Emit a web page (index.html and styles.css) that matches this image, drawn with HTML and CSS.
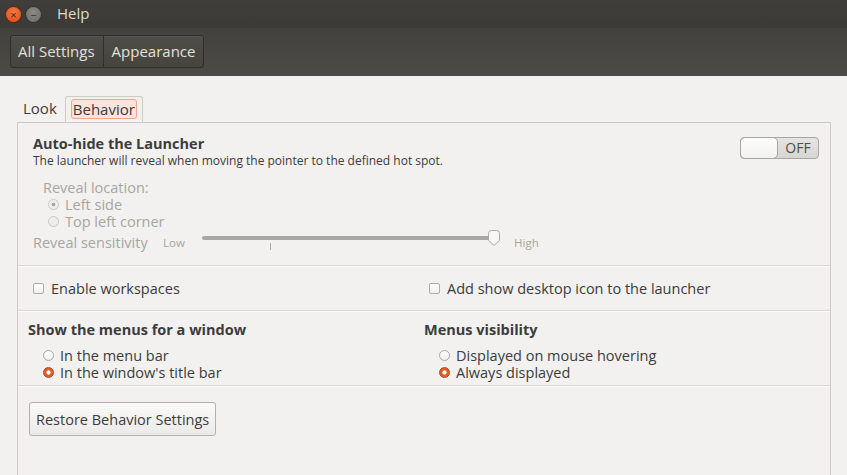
FILE: index.html
```html
<!DOCTYPE html>
<html lang="en">
<head>
    <meta charset="UTF-8">
    <title>Help</title>
    <link rel="stylesheet" href="styles.css">
</head>
<body>
    <div class="titlebar">
        <span class="wbtn close">&times;</span>
        <span class="wbtn minimize">&minus;</span>
        <span class="title">Help</span>
    </div>
    <div class="toolbar">
        <div class="crumbs">
            <button class="crumb">All Settings</button>
            <button class="crumb">Appearance</button>
        </div>
    </div>
    <div class="content">
        <div class="tabs">
            <div class="tab">Look</div>
            <div class="tab active"><span class="focus">Behavior</span></div>
        </div>
        <div class="panel">
            <section class="launcher">
                <div class="launcher-head">
                    <div>
                        <div class="heading">Auto-hide the Launcher</div>
                        <div class="desc">The launcher will reveal when moving the pointer to the defined hot spot.</div>
                    </div>
                    <div class="switch"><span class="knob"></span><span class="switch-label">OFF</span></div>
                </div>
                <div class="reveal disabled">
                    <div class="reveal-title">Reveal location:</div>
                    <label class="option"><span class="radio checked-dim"></span>Left side</label>
                    <label class="option"><span class="radio"></span>Top left corner</label>
                </div>
                <div class="sensitivity disabled">
                    <span class="sens-label">Reveal sensitivity</span>
                    <span class="small low">Low</span>
                    <div class="slider">
                        <div class="trough"></div>
                        <div class="tick"></div>
                        <svg class="thumb" width="14" height="16" viewBox="0 0 14 16">
                            <path d="M1.5 3.5 Q1.5 0.5 4.5 0.5 L9.5 0.5 Q12.5 0.5 12.5 3.5 L12.5 10.5 L7 15.3 L1.5 10.5 Z" fill="#f7f6f5" stroke="#aaa8a4"/>
                        </svg>
                    </div>
                    <span class="small">High</span>
                </div>
            </section>
            <section class="two-col checks">
                <label class="check-item"><span class="checkbox"></span>Enable workspaces</label>
                <label class="check-item"><span class="checkbox"></span>Add show desktop icon to the launcher</label>
            </section>
            <section class="two-col menus">
                <div class="group">
                    <div class="heading">Show the menus for a window</div>
                    <label class="option"><span class="radio"></span>In the menu bar</label>
                    <label class="option"><span class="radio on"></span>In the window's title bar</label>
                </div>
                <div class="group">
                    <div class="heading">Menus visibility</div>
                    <label class="option"><span class="radio"></span>Displayed on mouse hovering</label>
                    <label class="option"><span class="radio on"></span>Always displayed</label>
                </div>
            </section>
            <section class="restore">
                <button class="btn">Restore Behavior Settings</button>
            </section>
        </div>
    </div>
</body>
</html>
```

FILE: styles.css
```css
html, body {
    margin: 0;
    height: 100%;
}

body {
    font-family: 'Open Sans', 'Noto Sans', sans-serif;
    font-size: 14px;
    color: #3c3c3c;
    background-color: #f2f1f0;
    overflow: hidden;
}

/* window chrome */
.titlebar {
    height: 28px;
    background: linear-gradient(#3f3e3a, #3b3a36);
    display: flex;
    align-items: center;
    padding-left: 6px;
    box-sizing: border-box;
}

.wbtn {
    width: 15px;
    height: 15px;
    border-radius: 50%;
    display: flex;
    align-items: center;
    justify-content: center;
    font-size: 11px;
    line-height: 1;
    color: #3b2a22;
    margin-right: 5px;
}

.close {
    background: radial-gradient(circle at 50% 35%, #f5793f, #df4a16);
    box-shadow: 0 0 0 1px #5a2a18;
}

.minimize {
    background: radial-gradient(circle at 50% 35%, #8b8a85, #6c6b66);
    box-shadow: 0 0 0 1px #333;
    color: #2f2e2b;
}

.title {
    color: #dfdbd2;
    font-size: 15px;
    margin-left: 11px;
    margin-top: -2px;
}

.toolbar {
    height: 48px;
    background: linear-gradient(#43413d, #4d4b46);
    padding: 7px 10px 0;
    box-sizing: border-box;
}

.crumbs {
    display: inline-flex;
    height: 33px;
    box-sizing: border-box;
    border: 1px solid #2f2e2b;
    border-radius: 3px;
    background: linear-gradient(#4f4d48, #46443f);
    box-shadow: inset 0 1px rgba(255, 255, 255, 0.06);
}

.crumb {
    font-family: inherit;
    font-size: 15px;
    color: #e3e0d9;
    background: none;
    border: none;
    padding: 0 8px 1px 7px;
    margin: 0;
}

.crumb + .crumb {
    border-left: 1px solid #2f2e2b;
    padding: 0 8px 1px 8px;
}

/* notebook */
.content {
    padding: 20px 0 0 17px;
}

.tabs {
    display: flex;
    align-items: flex-end;
    height: 26px;
}

.tab {
    font-size: 15px;
    padding: 0 6px 3px;
    height: 21px;
    line-height: 21px;
}

.tab.active {
    border: 1px solid #cfcbc5;
    border-bottom: none;
    border-radius: 3px 3px 0 0;
    padding: 2px 5px 4px;
    height: 19px;
    line-height: 19px;
    margin-left: 2px;
    background: #f2f1f0;
}

.focus {
    display: inline-block;
    border: 1px solid #f0a888;
    background: #fbe4d9;
    border-radius: 3px;
    line-height: 18px;
    padding: 0 1px;
}

.panel {
    width: 812px;
    height: 352px;
    border: 1px solid #cdc9c3;
    border-bottom: none;
}

section {
    border-bottom: 1px solid #dcd9d4;
    box-shadow: 0 1px #fbfbfa;
}

.launcher {
    padding: 12px 10px 15px 15px;
    height: 115px;
}

.launcher-head {
    display: flex;
    justify-content: space-between;
}

.heading {
    font-weight: bold;
    font-size: 14.5px;
    line-height: 18px;
}

.desc {
    font-size: 12px;
    line-height: 16px;
}

.switch {
    width: 77px;
    height: 20px;
    border: 1px solid #a8a6a2;
    border-radius: 4px;
    background: linear-gradient(#e5e4e2, #d7d6d3);
    display: flex;
    margin-top: 2px;
    margin-right: 1px;
}

.knob {
    width: 38px;
    height: 22px;
    margin: -1px 0 0 -1px;
    border: 1px solid #a8a6a2;
    border-radius: 5px;
    background: linear-gradient(#fdfdfd, #f2f1f0);
    box-sizing: border-box;
}

.switch-label {
    flex: 1;
    text-align: center;
    font-size: 14px;
    line-height: 20px;
    color: #4c4c4c;
}

.disabled {
    color: #a7a5a1;
}

.reveal {
    margin: 10px 0 0 10px;
    line-height: 17px;
    font-size: 14.5px;
}

.reveal .option {
    padding-left: 5px;
}

.option {
    display: flex;
    align-items: center;
    line-height: 17px;
    font-size: 14.5px;
}

.radio {
    width: 11px;
    height: 11px;
    border-radius: 50%;
    border: 1px solid #a9a7a3;
    background: linear-gradient(#ffffff, #eeeeec);
    margin-right: 6px;
    box-sizing: border-box;
    flex: none;
}

.disabled .radio {
    border-color: #cac8c4;
    background: #efeeec;
}

.radio.checked-dim {
    background: radial-gradient(circle, #a9a7a3 0 1.6px, #efeeec 2.2px);
}

.radio.on {
    border-color: #b8461c;
    background: radial-gradient(circle, #ffffff 0 1.8px, #e05e27 2.4px);
}

.sensitivity {
    display: flex;
    align-items: center;
    margin-top: 3px;
    font-size: 14.5px;
    line-height: 18px;
}

.sens-label {
    width: 130px;
    flex: none;
}

.small {
    font-size: 11.5px;
}

.low {
    width: 39px;
    flex: none;
}

.slider {
    position: relative;
    width: 298px;
    height: 20px;
    margin-right: 14px;
}

.trough {
    position: absolute;
    left: 0;
    right: 5px;
    top: 3px;
    height: 4px;
    border-radius: 2px;
    background: #a9a8a5;
}

.tick {
    position: absolute;
    left: 68px;
    top: 10px;
    width: 1px;
    height: 7px;
    background: #aaa8a4;
}

.thumb {
    position: absolute;
    right: -1px;
    top: -3px;
}

.two-col {
    display: grid;
    grid-template-columns: 396px 1fr;
}

.checks {
    height: 44px;
    align-items: center;
    padding-left: 15px;
}

.check-item {
    display: flex;
    align-items: center;
    font-size: 14.5px;
}

.checkbox {
    width: 11px;
    height: 11px;
    box-sizing: border-box;
    border: 1px solid #aeaca8;
    border-radius: 2px;
    background: linear-gradient(#ffffff, #f0f0ee);
    margin-right: 7px;
}

.menus {
    height: 64px;
    padding: 10px 0 0 10px;
}

.group .heading {
    margin-bottom: 8px;
}

.group .option {
    padding-left: 15px;
}

.restore {
    border: none;
    box-shadow: none;
    padding: 16px 0 0 11px;
}

.btn {
    font-family: inherit;
    font-size: 14.5px;
    color: #3c3c3c;
    height: 34px;
    padding: 0 6px;
    border: 1px solid #b3b0ab;
    border-radius: 3px;
    background: linear-gradient(#fafaf9, #ebeae7);
}
```
